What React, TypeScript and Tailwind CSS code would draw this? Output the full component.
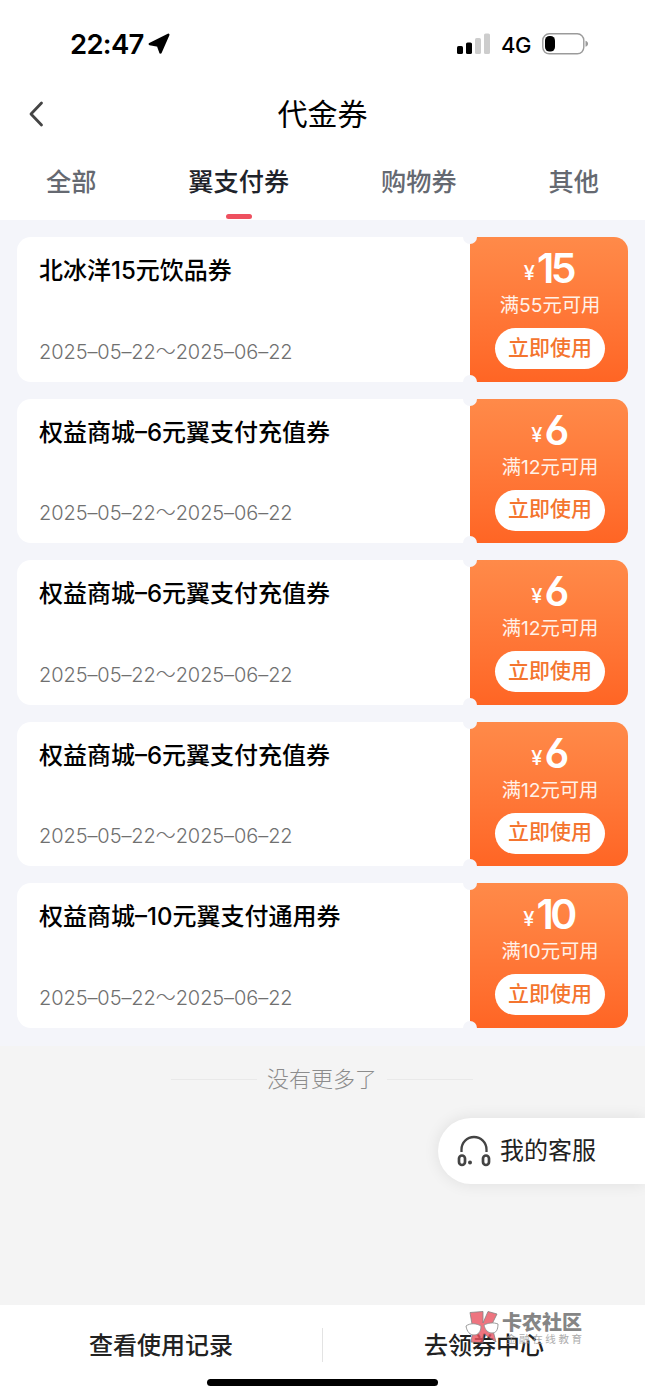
const coupons = [
  { title: "北冰洋15元饮品券", amount: "15", limit: "满55元可用", date: "2025–05–22～2025–06–22" },
  { title: "权益商城–6元翼支付充值券", amount: "6", limit: "满12元可用", date: "2025–05–22～2025–06–22" },
  { title: "权益商城–6元翼支付充值券", amount: "6", limit: "满12元可用", date: "2025–05–22～2025–06–22" },
  { title: "权益商城–6元翼支付充值券", amount: "6", limit: "满12元可用", date: "2025–05–22～2025–06–22" },
  { title: "权益商城–10元翼支付通用券", amount: "10", limit: "满10元可用", date: "2025–05–22～2025–06–22" },
]

const tabs = ["全部", "翼支付券", "购物券", "其他"]

function StatusBar() {
  return (
    <div className="flex h-[88px] items-center justify-between pl-[70px] pr-[56px]">
      <div className="flex items-center gap-[5px]">
        <span className="w-[73px] pt-px text-[27.500px] leading-none font-semibold tracking-[-0.700px]">22:47</span>
        <svg width="22" height="22" viewBox="0 0 22 22">
          <path d="M20.300 1.800 12.500 19.500 10 12.600 1.800 11Z" fill="#000" stroke="#000" strokeWidth="2.400" strokeLinejoin="round" />
        </svg>
      </div>
      <div className="flex items-center">
        <svg width="33" height="22" viewBox="0 0 33 22">
          <rect x="0" y="13" width="6" height="8" rx="1.600" />
          <rect x="9" y="9.500" width="6" height="11.500" rx="1.600" />
          <rect x="18" y="5" width="6" height="16" rx="1.600" fill="#cdcdcd" />
          <rect x="27" y="0.500" width="6" height="20.500" rx="1.600" fill="#cdcdcd" />
        </svg>
        <span className="ml-[11px] w-[30px] pt-px text-[22px] leading-none font-medium tracking-[-0.500px]">4G</span>
        <svg className="ml-[10px]" width="48" height="22" viewBox="0 0 48 22">
          <rect x="1.800" y="0.800" width="41" height="20" rx="6.500" fill="none" stroke="#9b9b9b" strokeWidth="1.400" />
          <rect x="4" y="3" width="10" height="15.500" rx="4.500" />
          <path d="M44.500 7.800c3.400 1 3.400 5 0 6z" fill="#9b9b9b" />
        </svg>
      </div>
    </div>
  )
}

function Coupon({ title, amount, limit, date }: (typeof coupons)[number]) {
  return (
    <div className="relative flex h-[144.500px] overflow-hidden rounded-[14px]">
      <div className="flex flex-1 flex-col justify-between bg-white pt-[18px] pb-[14px] pl-[22px]">
        <h3 className="text-[24px] leading-[32px] font-medium text-black">{title}</h3>
        <p className="text-[20px] leading-[32px] font-light tracking-[-0.080px] text-[#707070]">{date}</p>
      </div>
      <div className="flex w-[158px] flex-col items-center bg-linear-to-b from-[#ff8a49] to-[#ff6524] pt-[11px] pl-[2px] text-white">
        <div className="flex h-[40px] items-start">
          <span className="mr-[2px] -ml-[3px] text-[20px] leading-[50px] font-medium">¥</span>
          <span className="text-[41px] leading-[41px] font-semibold tracking-[-3.500px] [font-feature-settings:'ss01']">{amount}</span>
        </div>
        <p className="mt-[3px] text-[19.300px] leading-[28px] text-[#fff2e9]">{limit}</p>
        <button className="mt-[9px] h-[41px] w-[110px] rounded-full bg-white pb-[3px] text-[21px] leading-none font-medium text-[#f4752f]">
          立即使用
        </button>
      </div>
      {/* ticket notches on the tear line */}
      <span className="absolute -top-[7px] right-[151px] size-[14px] rounded-full bg-[#f4f5fa]" />
      <span className="absolute right-[151px] -bottom-[7px] size-[14px] rounded-full bg-[#f4f5fa]" />
    </div>
  )
}

function Watermark() {
  return (
    <div className="absolute top-[5px] left-[465px] flex">
      <svg width="36" height="36" viewBox="0 0 36 36" className="opacity-80">
        <path d="M5 2.500 18 1.500V13L23 1.500 32 4 26.500 15 31 32 19 24 18 33 6 32 8 20Z" fill="#eb5260" stroke="#666" strokeWidth="0.800" />
        <path d="M1 16c4-3 10-3 15 0 0 6-3 9-7 9s-7-3-8-9Z M19 15c4-2 9-3 14-1 0 6-2 9-6 9s-7-3-8-8Z" fill="#fff" stroke="#777" strokeWidth="0.900" />
      </svg>
      <div className="ml-px flex flex-col">
        <span className="text-[20px] leading-[26px] font-black text-[#858585]">卡农社区</span>
        <span className="ml-[4px] text-[10.500px] leading-[8px] tracking-[2.600px] text-[#999] opacity-80">金融在线教育</span>
      </div>
    </div>
  )
}

export default function App() {
  return (
    <div className="flex h-[1398px] w-[645px] flex-col overflow-hidden bg-[#f4f4f4] font-['Inter','Noto_Sans_CJK_SC',sans-serif] text-black">
      <header className="h-[220px] bg-white">
        <StatusBar />
        <div className="flex h-[52px] items-center px-[27px]">
          <svg width="20" height="28" viewBox="0 0 20 28" fill="none">
            <path d="M14.500 3 4 14 14.500 25" stroke="#444" strokeWidth="2.800" strokeLinecap="round" strokeLinejoin="round" />
          </svg>
          <h1 className="flex-1 pr-[20px] text-center text-[30px] leading-none">代金券</h1>
        </div>
        <nav className="flex h-[80px] justify-between pt-[22px] pr-[46px] pl-[46px]">
          {tabs.map((tab) => (
            <div key={tab} className="flex flex-col items-center">
              <span className={`text-[25.200px] leading-[41px] font-medium ${tab === "翼支付券" ? "text-[#20232a]" : "text-[#656971]"}`}>
                {tab}
              </span>
              {tab === "翼支付券" && <span className="mt-[11px] h-[5px] w-[26px] rounded-full bg-[#ee505f]" />}
            </div>
          ))}
        </nav>
      </header>

      <main className="flex h-[826px] shrink-0 flex-col gap-[17px] bg-[#f4f5fa] px-[17px] pt-[17px]">
        {coupons.map((coupon, index) => (
          <Coupon key={index} {...coupon} />
        ))}
      </main>

      <div className="mt-[17px] flex items-center justify-center gap-[10px] pr-px">
        <span className="h-px w-[86px] bg-[#e9e9e9]" />
        <span className="text-[22px] leading-[32px] font-light text-[#8c8c8c]">没有更多了</span>
        <span className="h-px w-[86px] bg-[#e9e9e9]" />
      </div>

      <div className="mt-[23px] flex h-[66px] w-[207px] items-center self-end rounded-l-full bg-white pl-[19px] shadow-[0_0_16px_rgba(0,0,0,0.09)]">
        <svg width="34" height="34" viewBox="0 0 34 34" fill="none" stroke="#444">
          <path d="M4.500 18v-2.500a12.500 12.500 0 0 1 25 0V18" strokeWidth="2.300" />
          <rect x="2" y="21.500" width="6" height="9.500" rx="3" strokeWidth="2.700" />
          <rect x="26" y="21.500" width="6" height="9.500" rx="3" strokeWidth="2.700" />
          <circle cx="13" cy="28.500" r="2" fill="#444" stroke="none" />
        </svg>
        <span className="ml-[9px] text-[24px] leading-none text-[#222]">我的客服</span>
      </div>

      <footer className="relative mt-auto h-[93px] bg-white">
        <div className="flex h-[80px] items-center text-[24px] font-medium text-[#222]">
          <span className="w-[322px] pt-[2px] text-center">查看使用记录</span>
          <span className="h-[34px] w-px bg-[#e3e3e3]" />
          <span className="flex-1 pt-[2px] text-center">去领券中心</span>
        </div>
        <div className="mx-auto -mt-[6px] h-[7px] w-[231px] rounded-full bg-black" />
        <Watermark />
      </footer>
    </div>
  )
}
